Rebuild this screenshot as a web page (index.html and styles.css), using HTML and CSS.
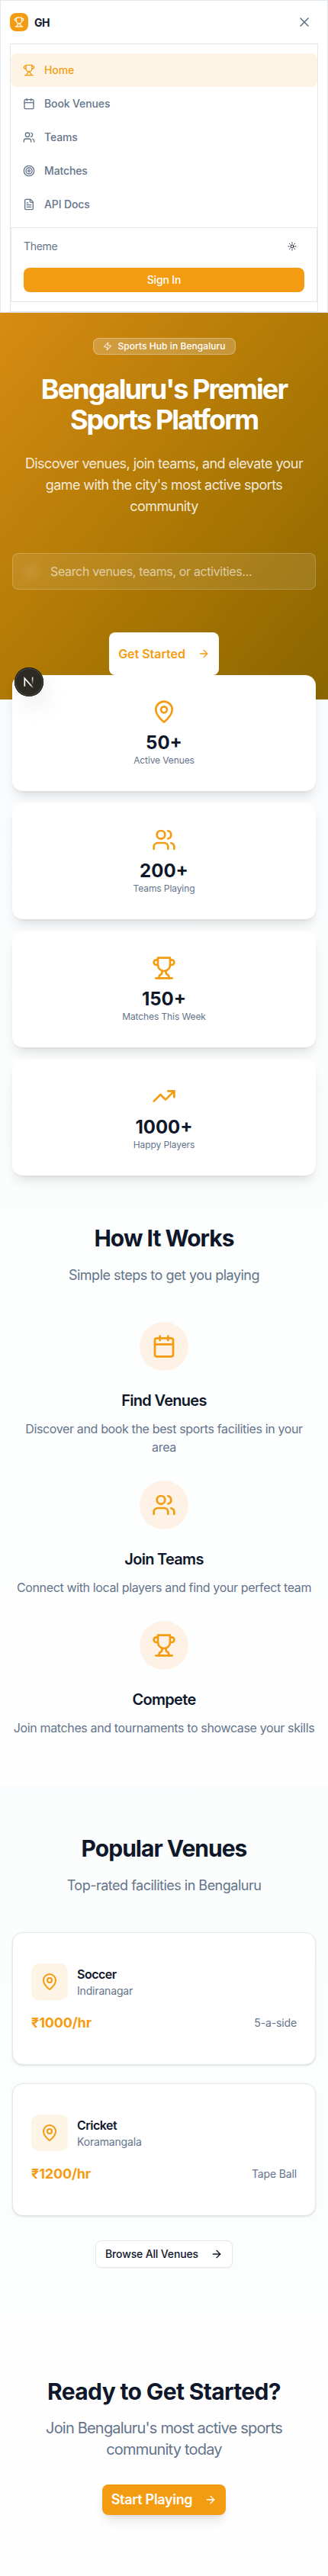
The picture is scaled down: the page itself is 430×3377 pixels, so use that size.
FILE: index.html
```html
<!DOCTYPE html>
<html lang="en">
<head>
<meta charset="utf-8">
<meta name="viewport" content="width=device-width, initial-scale=1">
<title>GH</title>
<link rel="stylesheet" href="styles.css">
</head>
<body>
<svg class="sprite" aria-hidden="true">
  <symbol id="trophy" viewBox="0 0 24 24"><path d="M6 9H4.5a2.5 2.5 0 0 1 0-5H6"/><path d="M18 9h1.5a2.5 2.5 0 0 0 0-5H18"/><path d="M4 22h16"/><path d="M10 14.66V17c0 .55-.47.98-.97 1.21C7.85 18.75 7 20.24 7 22"/><path d="M14 14.66V17c0 .55.47.98.97 1.21C16.15 18.75 17 20.24 17 22"/><path d="M18 2H6v7a6 6 0 0 0 12 0V2Z"/></symbol>
  <symbol id="x" viewBox="0 0 24 24"><path d="M18 6 6 18"/><path d="m6 6 12 12"/></symbol>
  <symbol id="calendar" viewBox="0 0 24 24"><path d="M8 2v4"/><path d="M16 2v4"/><rect width="18" height="18" x="3" y="4" rx="2"/><path d="M3 10h18"/></symbol>
  <symbol id="users" viewBox="0 0 24 24"><path d="M16 21v-2a4 4 0 0 0-4-4H6a4 4 0 0 0-4 4v2"/><path d="M16 3.128a4 4 0 0 1 0 7.744"/><path d="M22 21v-2a4 4 0 0 0-3-3.87"/><circle cx="9" cy="7" r="4"/></symbol>
  <symbol id="target" viewBox="0 0 24 24"><circle cx="12" cy="12" r="10"/><circle cx="12" cy="12" r="6"/><circle cx="12" cy="12" r="2"/></symbol>
  <symbol id="file" viewBox="0 0 24 24"><path d="M15 2H6a2 2 0 0 0-2 2v16a2 2 0 0 0 2 2h12a2 2 0 0 0 2-2V7Z"/><path d="M14 2v4a2 2 0 0 0 2 2h4"/><path d="M10 9H8"/><path d="M16 13H8"/><path d="M16 17H8"/></symbol>
  <symbol id="sun" viewBox="0 0 24 24"><circle cx="12" cy="12" r="4"/><path d="M12 2v2"/><path d="M12 20v2"/><path d="m4.93 4.93 1.41 1.41"/><path d="m17.66 17.66 1.41 1.41"/><path d="M2 12h2"/><path d="M20 12h2"/><path d="m6.34 17.66-1.41 1.41"/><path d="m19.07 4.93-1.41 1.41"/></symbol>
  <symbol id="zap" viewBox="0 0 24 24"><path d="M4 14a1 1 0 0 1-.78-1.63l9.9-10.2a.5.5 0 0 1 .86.46l-1.92 6.02A1 1 0 0 0 13 10h7a1 1 0 0 1 .78 1.63l-9.9 10.2a.5.5 0 0 1-.86-.46l1.92-6.02A1 1 0 0 0 11 14z"/></symbol>
  <symbol id="arrow" viewBox="0 0 24 24"><path d="M5 12h14"/><path d="m12 5 7 7-7 7"/></symbol>
  <symbol id="pin" viewBox="0 0 24 24"><path d="M20 10c0 4.993-5.539 10.193-7.399 11.799a1 1 0 0 1-1.202 0C9.539 20.193 4 14.993 4 10a8 8 0 0 1 16 0"/><circle cx="12" cy="10" r="3"/></symbol>
  <symbol id="trend" viewBox="0 0 24 24"><path d="M16 7h6v6"/><path d="m22 7-8.5 8.5-5-5L2 17"/></symbol>
</svg>

<header class="header">
  <div class="topbar">
    <a class="brand"><span class="brand-mark"><svg class="icon i14"><use href="#trophy"/></svg></span><span class="brand-name">GH</span></a>
    <button class="close" aria-label="Close menu"><svg class="icon i20"><use href="#x"/></svg></button>
  </div>
  <div class="menu">
    <nav class="nav">
      <a class="nav-item active"><svg class="icon i16"><use href="#trophy"/></svg>Home</a>
      <a class="nav-item"><svg class="icon i16"><use href="#calendar"/></svg>Book Venues</a>
      <a class="nav-item"><svg class="icon i16"><use href="#users"/></svg>Teams</a>
      <a class="nav-item"><svg class="icon i16"><use href="#target"/></svg>Matches</a>
      <a class="nav-item"><svg class="icon i16"><use href="#file"/></svg>API Docs</a>
    </nav>
    <div class="menu-foot">
      <div class="theme"><span>Theme</span><button class="theme-toggle" aria-label="Toggle theme"><svg class="icon i12"><use href="#sun"/></svg></button></div>
      <button class="btn signin">Sign In</button>
    </div>
  </div>
</header>

<main>
  <section class="hero">
    <span class="badge"><svg class="icon i12"><use href="#zap"/></svg>Sports Hub in Bengaluru</span>
    <h1>Bengaluru's Premier Sports Platform</h1>
    <p class="lead">Discover venues, join teams, and elevate your game with the city's most active sports community</p>
    <div class="search"><span class="search-glow"></span><span>Search venues, teams, or activities...</span></div>
    <button class="btn get-started">Get Started<svg class="icon i16"><use href="#arrow"/></svg></button>
  </section>

  <section class="stats">
    <article class="stat"><svg class="icon i32"><use href="#pin"/></svg><strong>50+</strong><span>Active Venues</span></article>
    <article class="stat"><svg class="icon i32"><use href="#users"/></svg><strong>200+</strong><span>Teams Playing</span></article>
    <article class="stat"><svg class="icon i32"><use href="#trophy"/></svg><strong>150+</strong><span>Matches This Week</span></article>
    <article class="stat"><svg class="icon i32"><use href="#trend"/></svg><strong>1000+</strong><span>Happy Players</span></article>
    <div class="next-badge"><svg width="38" height="38" viewBox="0 0 38 38" fill="none"><defs><linearGradient id="na" x1="18" y1="18" x2="25" y2="27" gradientUnits="userSpaceOnUse"><stop offset=".5" stop-color="#fff"/><stop offset="1" stop-color="#fff" stop-opacity="0"/></linearGradient><linearGradient id="nb" x1="24" y1="13" x2="24" y2="23" gradientUnits="userSpaceOnUse"><stop stop-color="#fff"/><stop offset="1" stop-color="#fff" stop-opacity="0"/></linearGradient></defs><path d="M13.3 24.8V14.2L24.6 27" stroke="url(#na)" stroke-width="1.7"/><path d="M23.6 13.2h.01v9" stroke="url(#nb)" stroke-width="1.6"/></svg></div>
  </section>

  <section class="section how">
    <h2>How It Works</h2>
    <p class="sub">Simple steps to get you playing</p>
    <div class="steps">
      <article class="step"><span class="disc"><svg class="icon i32"><use href="#calendar"/></svg></span><h3>Find Venues</h3><p>Discover and book the best sports facilities in your area</p></article>
      <article class="step"><span class="disc"><svg class="icon i32"><use href="#users"/></svg></span><h3>Join Teams</h3><p>Connect with local players and find your perfect team</p></article>
      <article class="step"><span class="disc"><svg class="icon i32"><use href="#trophy"/></svg></span><h3>Compete</h3><p>Join matches and tournaments to showcase your skills</p></article>
    </div>
  </section>

  <section class="section popular">
    <h2>Popular Venues</h2>
    <p class="sub">Top-rated facilities in Bengaluru</p>
    <div class="venues">
      <article class="venue">
        <div class="venue-head"><span class="tile"><svg class="icon i24"><use href="#pin"/></svg></span><div><h4>Soccer</h4><p>Indiranagar</p></div></div>
        <div class="venue-foot"><strong>₹1000/hr</strong><span>5-a-side</span></div>
      </article>
      <article class="venue">
        <div class="venue-head"><span class="tile"><svg class="icon i24"><use href="#pin"/></svg></span><div><h4>Cricket</h4><p>Koramangala</p></div></div>
        <div class="venue-foot"><strong>₹1200/hr</strong><span>Tape Ball</span></div>
      </article>
    </div>
    <button class="btn browse">Browse All Venues<svg class="icon i16"><use href="#arrow"/></svg></button>
  </section>

  <section class="cta">
    <h2>Ready to Get Started?</h2>
    <p>Join Bengaluru's most active sports community today</p>
    <button class="btn start">Start Playing<svg class="icon i16"><use href="#arrow"/></svg></button>
  </section>
</main>
</body>
</html>
```
FILE: styles.css
```css
:root {
  --primary: #f39c12;
  --ink: #0f172a;
  --muted: #64748b;
  --line: #e2e8f0;
  --tint: #fef4e6;
}
* { box-sizing: border-box; margin: 0; padding: 0; }
body {
  font-family: Inter, "Liberation Sans", sans-serif;
  font-size: 16px;
  line-height: 24px;
  color: var(--ink);
  background: #fff;
}
button { font: inherit; border: 0; background: none; color: inherit; }
.sprite { position: absolute; width: 0; height: 0; }
.icon { fill: none; stroke: currentColor; stroke-width: 2; stroke-linecap: round; stroke-linejoin: round; flex: none; display: block; }
.i12 { width: 12px; height: 12px; }
.i14 { width: 14px; height: 14px; }
.i16 { width: 16px; height: 16px; }
.i20 { width: 20px; height: 20px; }
.i24 { width: 24px; height: 24px; }
.i32 { width: 32px; height: 32px; }

.header { border: 1px solid var(--line); padding: 0 12px; background: #fff; }
.topbar { height: 56px; display: flex; align-items: center; justify-content: space-between; }
.brand { display: flex; align-items: center; gap: 8px; font-size: 14px; font-weight: 700; letter-spacing: -0.4px; }
.brand-name { padding-top: 2px; }
.brand-mark { width: 24px; height: 24px; border-radius: 8px; background: var(--primary); color: #fff; display: grid; place-items: center; }
.close { width: 36px; height: 36px; display: grid; place-items: center; color: var(--muted); }
.menu { border: 1px solid var(--line); padding: 12px 0; }
.nav-item { display: flex; align-items: center; gap: 12px; height: 44px; padding: 0 16px; border-radius: 8px; font-size: 14px; font-weight: 500; letter-spacing: -0.12px; color: var(--muted); }
.nav-item.active { background: var(--tint); color: var(--primary); }
.menu-foot { margin-top: 8px; border: 1px solid var(--line); padding: 12px 16px; display: flex; flex-direction: column; gap: 16px; }
.theme { display: flex; align-items: center; justify-content: space-between; height: 24px; font-size: 14px; letter-spacing: -0.3px; color: var(--muted); }
.theme-toggle { width: 32px; height: 24px; display: grid; place-items: center; color: var(--ink); }
.btn { display: inline-flex; align-items: center; justify-content: center; gap: 16px; border-radius: 8px; font-weight: 500; font-size: 14px; letter-spacing: -0.15px; white-space: nowrap; }
.signin { height: 32px; background: var(--primary); color: #fff; }

.hero {
  height: 507px;
  padding: 33px 16px 0;
  display: flex;
  flex-direction: column;
  align-items: center;
  text-align: center;
  color: #fff;
  background: linear-gradient(to bottom right, #d78b12, #b07a05 50%, #8a6500);
}
.badge { display: flex; align-items: center; gap: 8px; height: 22px; padding: 0 12px; border: 1px solid rgba(255,255,255,.3); border-radius: 8px; background: rgba(255,255,255,.2); font-size: 12px; line-height: 16px; font-weight: 500; letter-spacing: 0.06px; }
h1 { width: 398px; margin-top: 25px; font-size: 36px; line-height: 40px; font-weight: 700; letter-spacing: -1.9px; }
.lead { margin-top: 24px; font-size: 18px; line-height: 28px; letter-spacing: -0.57px; color: rgba(255,255,255,.85); }
.search { display: flex; align-items: center; gap: 8px; align-self: stretch; height: 48px; margin-top: 47px; padding: 0 8px; border: 1px solid rgba(255,255,255,.2); border-radius: 8px; background: rgba(255,255,255,.1); color: rgba(255,255,255,.6); letter-spacing: -0.35px; }
.search-glow { width: 33px; height: 33px; background: radial-gradient(circle, rgba(255,255,255,.08), rgba(255,255,255,0) 70%); }
.get-started { height: 56px; margin-top: 56px; padding: 0 12px; background: #fff; color: var(--primary); font-size: 16px; font-weight: 600; letter-spacing: -0.03px; }

.stats { position: relative; margin-top: -32px; padding: 0 16px; display: grid; gap: 16px; }
.stat { height: 152px; padding-top: 32px; display: flex; flex-direction: column; align-items: center; background: #fff; border-radius: 14px; box-shadow: 0 10px 15px -3px rgba(0,0,0,.1), 0 4px 6px -4px rgba(0,0,0,.1); }
.stat .icon { color: var(--primary); }
.stat strong { margin-top: 8px; font-size: 24px; line-height: 33px; margin-bottom: -1px; font-weight: 700; }
.stat span { font-size: 12px; line-height: 16px; letter-spacing: -0.1px; color: var(--muted); }
.next-badge { position: absolute; left: 19px; top: -10px; width: 38px; height: 38px; border-radius: 50%; background: #2d2a24; box-shadow: inset 0 0 0 1px #1c1b19, inset 0 0 0 2px #4a4843, 8px 16px 32px -8px rgba(0,0,0,.18); }

.section { padding: 64px 16px; display: flex; flex-direction: column; align-items: center; text-align: center; }
main { background: linear-gradient(#fafbfd 20%, #fcfefd 40%, #fdfefe 56%, #fefefe 64%, #fefefe 90%); }
h2 { font-size: 30px; line-height: 36px; font-weight: 700; letter-spacing: -0.98px; }
.sub { margin-top: 17px; font-size: 18px; line-height: 28px; letter-spacing: -0.5px; color: var(--muted); }
.steps { margin-top: 47px; display: grid; gap: 32px; }
.step { display: flex; flex-direction: column; align-items: center; }
.disc { width: 64px; height: 64px; border-radius: 50%; background: #fdf2e5; color: var(--primary); display: grid; place-items: center; }
.step h3 { margin-top: 25px; font-size: 20px; line-height: 28px; font-weight: 600; letter-spacing: -0.7px; }
.step p { margin-top: 11px; letter-spacing: -0.36px; color: var(--muted); }
.popular { background: linear-gradient(#fbfcfd, #fcfefd 40%, #fcfefe); }
.venues { align-self: stretch; margin-top: 47px; display: grid; gap: 24px; text-align: left; }
.venue { height: 174px; padding: 40px 24px; border: 1px solid var(--line); border-radius: 14px; background: #fff; box-shadow: 0 1px 3px rgba(0,0,0,.1), 0 1px 2px -1px rgba(0,0,0,.1); }
.venue-head { display: flex; align-items: center; gap: 12px; }
.tile { width: 48px; height: 48px; border-radius: 10px; background: var(--tint); color: var(--primary); display: grid; place-items: center; }
.venue h4 { font-size: 16px; line-height: 24px; font-weight: 600; letter-spacing: -0.5px; }
.venue-head p { font-size: 14px; line-height: 20px; letter-spacing: -0.17px; color: var(--muted); }
.venue-foot { margin-top: 16px; display: flex; align-items: center; justify-content: space-between; }
.venue-foot strong { font-size: 18px; line-height: 28px; font-weight: 700; letter-spacing: -0.14px; color: var(--primary); }
.venue-foot span { font-size: 14px; line-height: 20px; letter-spacing: -0.14px; color: var(--muted); }
.browse { height: 36px; margin-top: 32px; padding: 0 12px; border: 1px solid var(--line); background: #fff; box-shadow: 0 1px 2px rgba(0,0,0,.05); }
.cta { padding: 80px 16px; display: flex; flex-direction: column; align-items: center; text-align: center; }
.cta h2 { letter-spacing: -0.64px; }
.cta p { width: 398px; margin-top: 16px; font-size: 20px; line-height: 28px; letter-spacing: -0.8px; color: var(--muted); }
.start { height: 40px; margin-top: 32px; padding: 0 12px; background: var(--primary); color: #fff; font-size: 18px; font-weight: 600; letter-spacing: -0.32px; box-shadow: 0 10px 15px -3px rgba(0,0,0,.1), 0 4px 6px -4px rgba(0,0,0,.1); }
```
